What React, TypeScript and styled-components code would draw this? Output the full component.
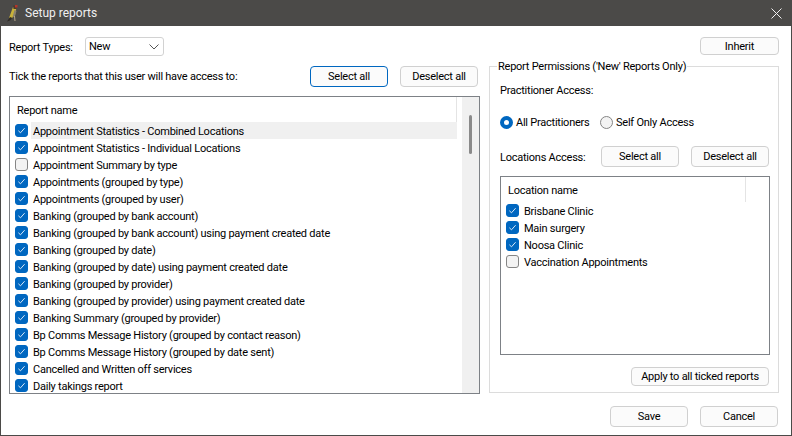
import React from "react";
import styled, { createGlobalStyle } from "styled-components";

const Global = createGlobalStyle`
  html, body { margin: 0; padding: 0; background: #fff; }
  body { font: 11px/16px Roboto, "Liberation Sans", sans-serif; letter-spacing: -0.24px; color: #000; }
`;

const Win = styled.div`
  width: 792px; height: 436px; box-sizing: border-box;
  border: 1px solid #4b4a48; border-top: 0;
  display: flex; flex-direction: column; overflow: hidden; background: #fff;
`;
const TitleBar = styled.div`
  height: 26px; flex: none; background: #4b4a48; color: #f0f0f0;
  display: flex; align-items: center; padding: 0 9px 0 5px; gap: 5px; font-size: 12px; letter-spacing: 0;
`;
const TitleText = styled.span`flex: 1;`;
const Main = styled.div`
  display: flex; gap: 9px; padding: 11px 12px 0 8px; height: 368px; flex: none; box-sizing: border-box;
`;
const Left = styled.div`width: 471px; flex: none; display: flex; flex-direction: column;`;
const Right = styled.div`width: 290px; flex: none; display: flex; flex-direction: column;`;
const TypeRow = styled.div`display: flex; align-items: center; height: 19px; margin-bottom: 10px;`;
const TypeLabel = styled.span`width: 76px; flex: none; padding-top: 2px;`;
const FakeSelect = styled.div`
  width: 79px; height: 19px; box-sizing: border-box; border: 1px solid #d2d2d2; border-radius: 3px;
  display: flex; align-items: center; justify-content: space-between; padding: 0 4px 0 3px;
`;
const ActionRow = styled.div`display: flex; align-items: center; height: 21px; margin-bottom: 9px; gap: 12px; padding-right: 2px;`;
const Grow = styled.span`flex: 1;`;
const Btn = styled.button<{ $w?: number; $h?: number; $primary?: boolean }>`
  width: ${p => p.$w ?? 78}px; height: ${p => p.$h ?? 21}px; flex: none; padding: 1px 0 0;
  box-sizing: border-box; background: #fbfbfb; color: #000;
  border: 1px solid ${p => (p.$primary ? "#0067c0" : "#d0d0d0")}; border-radius: 4px;
  font: inherit; letter-spacing: inherit; line-height: 14px;
`;
const ListBox = styled.div<{ $h: number }>`
  height: ${p => p.$h}px; flex: none; box-sizing: border-box; border: 1px solid #7d8186;
  display: flex; overflow: hidden; background: #fff;
`;
const ListCol = styled.div`flex: 1; min-width: 0; padding-right: 5px; display: flex; flex-direction: column;`;
const Header = styled.div<{ $sep: number }>`
  height: 25px; flex: none; box-sizing: border-box; padding: 6px 0 0 7px; position: relative;
  &::after {
    content: ""; position: absolute; top: 0; bottom: 0; right: ${p => p.$sep}px; width: 1px; background: #e4e4e4;
  }
`;
const Row = styled.div`
  height: 17px; flex: none; display: flex; align-items: center; padding-left: 5px; white-space: nowrap;
`;
const RowText = styled.span<{ $hl?: boolean }>`
  flex: 1; height: 17px; line-height: 19px; margin-left: 3px; padding-left: 2px;
  background: ${p => (p.$hl ? "#f0f0f0" : "transparent")};
`;
const Box = styled.span<{ $on: boolean }>`
  width: 13px; height: 13px; flex: none; box-sizing: border-box; border-radius: 3px;
  background: ${p => (p.$on ? "#0067c0" : "#f3f3f3")};
  border: 1px solid ${p => (p.$on ? "#0067c0" : "#858585")};
  display: flex; align-items: center; justify-content: center;
`;
const Scrollbar = styled.div`width: 17px; flex: none; background: #f0f0f0; padding: 18px 0 0 7px; box-sizing: border-box;`;
const Thumb = styled.div`width: 3px; height: 39px; border-radius: 2px; background: #8a8a8a;`;
const InheritRow = styled.div`display: flex; justify-content: flex-end; height: 18px; margin-bottom: 11px;`;
const Group = styled.div`
  position: relative; height: 327px; flex: none; box-sizing: border-box; border: 1px solid #dcdcdc;
  padding: 15px 8px 0 10px; display: flex; flex-direction: column;
`;
const Legend = styled.span`
  position: absolute; top: -8px; left: 7px; background: #fff; padding: 0 1px; white-space: nowrap;
`;
const RadioRow = styled.div`display: flex; align-items: center; height: 16px; margin: 15px 0 16px;`;
const RadioItem = styled.label<{ $w: number }>`display: flex; align-items: center; gap: 3px; width: ${p => p.$w}px; white-space: nowrap;`;
const RadioText = styled.span`padding-top: 1px;`;
const Radio = styled.span<{ $on: boolean }>`
  width: 13px; height: 13px; box-sizing: border-box; border-radius: 50%; flex: none;
  background: ${p => (p.$on ? "#fff" : "#f3f3f3")};
  border: ${p => (p.$on ? "4px solid #0067c0" : "1px solid #858585")};
`;
const LocRow = styled.div`display: flex; align-items: center; height: 21px; margin-bottom: 9px;`;
const LocLabel = styled.span`width: 101px; flex: none; padding-top: 2px;`;
const LocBtnGap = styled.span`width: 12px; flex: none;`;
const ApplyRow = styled.div`display: flex; justify-content: flex-end; margin-top: 12px; padding-right: 1px;`;
const Footer = styled.div`display: flex; justify-content: flex-end; gap: 12px; padding: 12px 13px 0 0;`;
const Label = styled.span`white-space: nowrap; padding-top: 1px;`;

const Check = () => (
  <svg width="9" height="9" viewBox="0 0 9 9" fill="none">
    <path d="M1.4 4.8 L3.5 6.8 L7.6 2.2" stroke="#dbe9f7" strokeWidth="1" />
  </svg>
);
const Checkbox = ({ on }: { on: boolean }) => <Box $on={on}>{on && <Check />}</Box>;

const Bird = () => (
  <svg width="14" height="18" viewBox="0 0 14 18">
    <path d="M7 3 C9 2 11 4 10 6 L9 11 L5 15 L3 14 Z" fill="#c9b23a" />
    <path d="M7 1.5 L11 1.5 L10.5 5 L7.5 5 Z" fill="#4a3a30" />
    <path d="M9 1 L11.5 1 L11.5 3.5 L9 3.5 Z" fill="#b5342a" />
    <path d="M8.5 6 L10.5 7 L9 12 L6.5 13 Z" fill="#8a8170" />
    <path d="M4 13 L2 16 L1 17.5 L4 16.4 L6.5 14 Z" fill="#2f2b26" />
    <path d="M8.5 12 L9 17" stroke="#b9a98d" strokeWidth="1" />
  </svg>
);

const reports: [string, boolean][] = [
  ["Appointment Statistics - Combined Locations", true],
  ["Appointment Statistics - Individual Locations", true],
  ["Appointment Summary by type", false],
  ["Appointments (grouped by type)", true],
  ["Appointments (grouped by user)", true],
  ["Banking (grouped by bank account)", true],
  ["Banking (grouped by bank account) using payment created date", true],
  ["Banking (grouped by date)", true],
  ["Banking (grouped by date) using payment created date", true],
  ["Banking (grouped by provider)", true],
  ["Banking (grouped by provider) using payment created date", true],
  ["Banking Summary (grouped by provider)", true],
  ["Bp Comms Message History (grouped by contact reason)", true],
  ["Bp Comms Message History (grouped by date sent)", true],
  ["Cancelled and Written off services", true],
  ["Daily takings report", true],
];
const locations: [string, boolean][] = [
  ["Brisbane Clinic", true],
  ["Main surgery", true],
  ["Noosa Clinic", true],
  ["Vaccination Appointments", false],
];

export default function App() {
  return (
    <>
      <Global />
      <Win>
        <TitleBar>
          <Bird />
          <TitleText>Setup reports</TitleText>
          <svg width="11" height="11" viewBox="0 0 11 11" stroke="#f0f0f0" strokeWidth="1"><path d="M.5.5l10 10M10.5.5l-10 10" /></svg>
        </TitleBar>
        <Main>
          <Left>
            <TypeRow>
              <TypeLabel>Report Types:</TypeLabel>
              <FakeSelect>
                New
                <svg width="10" height="6" viewBox="0 0 10 6" fill="none" stroke="#555" strokeWidth="1"><path d="M.5.5L5 5 9.5.5" /></svg>
              </FakeSelect>
            </TypeRow>
            <ActionRow>
              <Label>Tick the reports that this user will have access to:</Label>
              <Grow />
              <Btn $primary>Select all</Btn>
              <Btn>Deselect all</Btn>
            </ActionRow>
            <ListBox $h={298}>
              <ListCol>
                <Header $sep={0}>Report name</Header>
                {reports.map(([name, on], i) => (
                  <Row key={name}>
                    <Checkbox on={on} />
                    <RowText $hl={i === 0}>{name}</RowText>
                  </Row>
                ))}
              </ListCol>
              <Scrollbar><Thumb /></Scrollbar>
            </ListBox>
          </Left>
          <Right>
            <InheritRow><Btn $w={79} $h={18}>Inherit</Btn></InheritRow>
            <Group>
              <Legend>Report Permissions ('New' Reports Only)</Legend>
              <Label>Practitioner Access:</Label>
              <RadioRow>
                <RadioItem $w={100}><Radio $on /><RadioText>All Practitioners</RadioText></RadioItem>
                <RadioItem $w={110}><Radio $on={false} /><RadioText>Self Only Access</RadioText></RadioItem>
              </RadioRow>
              <LocRow>
                <LocLabel>Locations Access:</LocLabel>
                <Btn>Select all</Btn>
                <LocBtnGap />
                <Btn>Deselect all</Btn>
              </LocRow>
              <ListBox $h={179}>
                <ListCol>
                  <Header $sep={18}>Location name</Header>
                  {locations.map(([name, on]) => (
                    <Row key={name}>
                      <Checkbox on={on} />
                      <RowText>{name}</RowText>
                    </Row>
                  ))}
                </ListCol>
              </ListBox>
              <ApplyRow><Btn $w={138} $h={19}>Apply to all ticked reports</Btn></ApplyRow>
            </Group>
          </Right>
        </Main>
        <Footer>
          <Btn>Save</Btn>
          <Btn>Cancel</Btn>
        </Footer>
      </Win>
    </>
  );
}
